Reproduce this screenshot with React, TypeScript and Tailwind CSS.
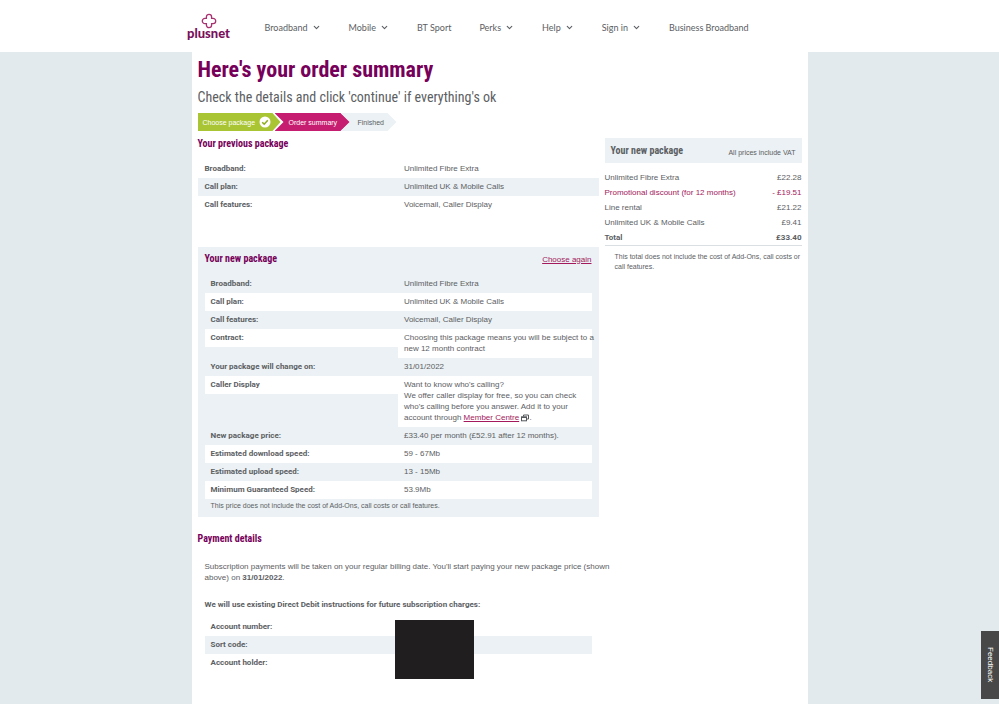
import React from 'react';
import { ChevronDown } from 'lucide-react';

interface Row {
  label: string;
  value: React.ReactNode;
}

const navItems = [
  { label: 'Broadband', menu: true },
  { label: 'Mobile', menu: true },
  { label: 'BT Sport', menu: false },
  { label: 'Perks', menu: true },
  { label: 'Help', menu: true },
  { label: 'Sign in', menu: true },
  { label: 'Business Broadband', menu: false },
];

const previousPackage: Row[] = [
  { label: 'Broadband:', value: 'Unlimited Fibre Extra' },
  { label: 'Call plan:', value: 'Unlimited UK & Mobile Calls' },
  { label: 'Call features:', value: 'Voicemail, Caller Display' },
];

const newPackage: Row[] = [
  { label: 'Broadband:', value: 'Unlimited Fibre Extra' },
  { label: 'Call plan:', value: 'Unlimited UK & Mobile Calls' },
  { label: 'Call features:', value: 'Voicemail, Caller Display' },
  {
    label: 'Contract:',
    value: (
      <>
        Choosing this package means you will be subject to a
        <br />
        new 12 month contract
      </>
    ),
  },
  { label: 'Your package will change on:', value: '31/01/2022' },
  {
    label: 'Caller Display',
    value: (
      <>
        Want to know who's calling?
        <br />
        We offer caller display for free, so you can check
        <br />
        who's calling before you answer. Add it to your
        <br />
        account through{' '}
        <a href="#member-centre" className="text-[#a3195b] underline">
          Member Centre
        </a>{' '}
        <NewWindowIcon />.
      </>
    ),
  },
  { label: 'New package price:', value: '£33.40 per month (£52.91 after 12 months).' },
  { label: 'Estimated download speed:', value: '59 - 67Mb' },
  { label: 'Estimated upload speed:', value: '13 - 15Mb' },
  { label: 'Minimum Guaranteed Speed:', value: '53.9Mb' },
];

const accountRows: Row[] = [
  { label: 'Account number:', value: '' },
  { label: 'Sort code:', value: '' },
  { label: 'Account holder:', value: '' },
];

const prices = [
  { label: 'Unlimited Fibre Extra', price: '£22.28' },
  { label: 'Promotional discount (for 12 months)', price: '- £19.51', promo: true },
  { label: 'Line rental', price: '£21.22' },
  { label: 'Unlimited UK & Mobile Calls', price: '£9.41' },
];

function NewWindowIcon() {
  return (
    <svg viewBox="0 0 8 8" className="inline h-2 w-2 align-text-bottom" fill="none" stroke="#55595c">
      <path d="M2.5 2.5V1H7.5V5H6" />
      <rect x="0.5" y="2.8" width="5" height="4" />
      <path d="M0.5 3.5H5.5" />
    </svg>
  );
}

function Logo() {
  return (
    <a href="#home" className="flex w-[42px] flex-col items-center pb-[3px] text-[#7a0f5c]">
      <svg viewBox="0 0 16 16" className="h-4 w-4" fill="none" stroke="#a8326f" strokeWidth="1.3">
        <path d="M5.4 5.4V3.9a2.6 2.6 0 0 1 5.2 0v1.5h1.5a2.6 2.6 0 0 1 0 5.2h-1.5v1.5a2.6 2.6 0 0 1-5.2 0v-1.5H3.9a2.6 2.6 0 0 1 0-5.2z" />
      </svg>
      <span className="font-[Lato,sans-serif] text-[13px] leading-2 font-black">plusnet</span>
    </a>
  );
}

function DetailTable({ rows, indent, stripe }: { rows: Row[]; indent: string; stripe: string }) {
  return (
    <table className="w-full table-fixed border-collapse text-left">
      <tbody>
        {rows.map((row, i) => (
          <tr key={row.label}>
            <th scope="row" className="w-1/2 p-0 align-top">
              <div
                className={`h-[18px] pt-[3px] pb-1 font-[Roboto,sans-serif] font-bold ${indent} ${i % 2 ? stripe : ''}`}
              >
                {row.label}
              </div>
            </th>
            <td className={`pt-[3px] pb-1 pl-[6px] align-top whitespace-nowrap ${i % 2 ? stripe : ''}`}>{row.value}</td>
          </tr>
        ))}
      </tbody>
    </table>
  );
}

export default function App() {
  return (
    <div className="flex min-h-screen flex-col bg-[#e2eaee] font-['Liberation_Sans',Arial,sans-serif] text-[8px] leading-[11px] text-[#5c6063]">
      <header className="bg-white">
        <div className="mx-auto flex h-[52px] max-w-[624px] items-center gap-[35px]">
          <Logo />
          <nav className="flex items-center gap-7 pt-[2px] font-[Lato,sans-serif] text-[9px] whitespace-nowrap">
            {navItems.map((item) => (
              <a key={item.label} href="#nav" className="flex items-center gap-1">
                {item.label}
                {item.menu && <ChevronDown className="h-[9px] w-[9px]" strokeWidth={3} />}
              </a>
            ))}
          </nav>
        </div>
      </header>

      <main className="mx-auto w-full max-w-[616px] flex-1 bg-white px-[6px] pb-6">
        <h1 className="pt-1 font-['Roboto_Condensed',Roboto,sans-serif] text-[22px] leading-7 font-bold text-[#77005a]">
          Here's your order summary
        </h1>
        <p className="pt-[1px] font-['Roboto_Condensed',Roboto,sans-serif] text-[14px] leading-6">
          Check the details and click 'continue' if everything's ok
        </p>

        <ol className="mt-1 flex h-[18px] items-center text-[7px] whitespace-nowrap">
          <li className="flex h-full w-[83px] items-center gap-1 bg-[#a9c534] pl-[5px] text-white [clip-path:polygon(0_0,75px_0,100%_50%,75px_100%,0_100%)]">
            Choose package
            <svg viewBox="0 0 12 12" className="h-3 w-3">
              <circle cx="6" cy="6" r="5.5" fill="#fff" />
              <path d="M3.2 6.2 5.2 8.2 8.8 4.2" fill="none" stroke="#8fae1f" strokeWidth="1.6" />
            </svg>
          </li>
          <li className="-ml-[6px] flex h-full w-[76px] items-center bg-[#c71d70] pl-[14px] text-white [clip-path:polygon(0_0,66px_0,100%_50%,66px_100%,0_100%,9px_50%)]">
            Order summary
          </li>
          <li className="-ml-[10px] flex h-full w-[56px] items-center bg-[#ebf1f4] pl-[17px] [clip-path:polygon(0_0,47px_0,100%_50%,47px_100%,0_100%,9px_50%)]">
            Finished
          </li>
        </ol>

        <div className="flex gap-[6px]">
          <div className="min-w-0 flex-[401]">
            <h2 className="pt-[5px] pb-2 font-['Roboto_Condensed',Roboto,sans-serif] text-[10px] leading-4 font-bold text-[#77005a]">
              Your previous package
            </h2>
            <DetailTable rows={previousPackage} indent="pl-[7px]" stripe="bg-[#ebf1f4]" />

            <section className="mt-[33px] bg-[#ebf1f4] px-[7px] pt-1 pb-[6px]">
              <div className="flex items-center justify-between pb-2">
                <h2 className="font-['Roboto_Condensed',Roboto,sans-serif] text-[10px] leading-4 font-bold text-[#77005a]">
                  Your new package
                </h2>
                <a href="#choose" className="text-[#a3195b] underline">
                  Choose again
                </a>
              </div>
              <DetailTable rows={newPackage} indent="pl-[6px]" stripe="bg-white" />
              <p className="pt-[1px] pl-[6px] text-[7px]">
                This price does not include the cost of Add-Ons, call costs or call features.
              </p>
            </section>

            <h2 className="mt-[14px] font-['Roboto_Condensed',Roboto,sans-serif] text-[10px] leading-4 font-bold text-[#77005a]">
              Payment details
            </h2>
            <div className="px-[7px] pt-[14px]">
              <p className="whitespace-nowrap">
                Subscription payments will be taken on your regular billing date. You'll start paying your new package
                price (shown
                <br />
                above) on <strong>31/01/2022</strong>.
              </p>
              <p className="pt-4 pb-2 font-[Roboto,sans-serif] font-bold">
                We will use existing Direct Debit instructions for future subscription charges:
              </p>
              <div className="relative">
                <DetailTable rows={accountRows} indent="pl-[6px]" stripe="bg-[#ebf1f4]" />
                <div className="absolute top-[2px] left-[190px] h-[59px] w-[79px] bg-[#201e1f]" />
              </div>
            </div>
          </div>

          <aside className="min-w-0 flex-[197] pt-[7px]">
            <div className="flex h-[25px] items-center justify-between bg-[#ebf1f4] px-[6px]">
              <h2 className="font-['Roboto_Condensed',Roboto,sans-serif] text-[10px] font-bold">Your new package</h2>
              <span className="pt-1 text-[7px]">All prices include VAT</span>
            </div>
            <table className="mt-[7px] w-full border-collapse border-b border-[#d9dfe2] leading-[15px]">
              <tbody>
                {prices.map((item) => (
                  <tr key={item.label} className={item.promo ? 'text-[#a3195b]' : ''}>
                    <td className="p-0">{item.label}</td>
                    <td className="p-0 text-right">{item.price}</td>
                  </tr>
                ))}
                <tr className="font-[Roboto,sans-serif] font-bold">
                  <td className="p-0">Total</td>
                  <td className="p-0 text-right">£33.40</td>
                </tr>
              </tbody>
            </table>
            <p className="pt-[6px] pl-[10px] text-[7px] leading-[10px]">
              This total does not include the cost of Add-Ons, call costs or call features.
            </p>
          </aside>
        </div>
      </main>

      <button
        type="button"
        className="fixed right-0 bottom-[5px] flex h-[68px] w-[18px] items-center justify-center bg-[#484848] text-[8px] text-white [writing-mode:vertical-rl]"
      >
        Feedback
      </button>
    </div>
  );
}
